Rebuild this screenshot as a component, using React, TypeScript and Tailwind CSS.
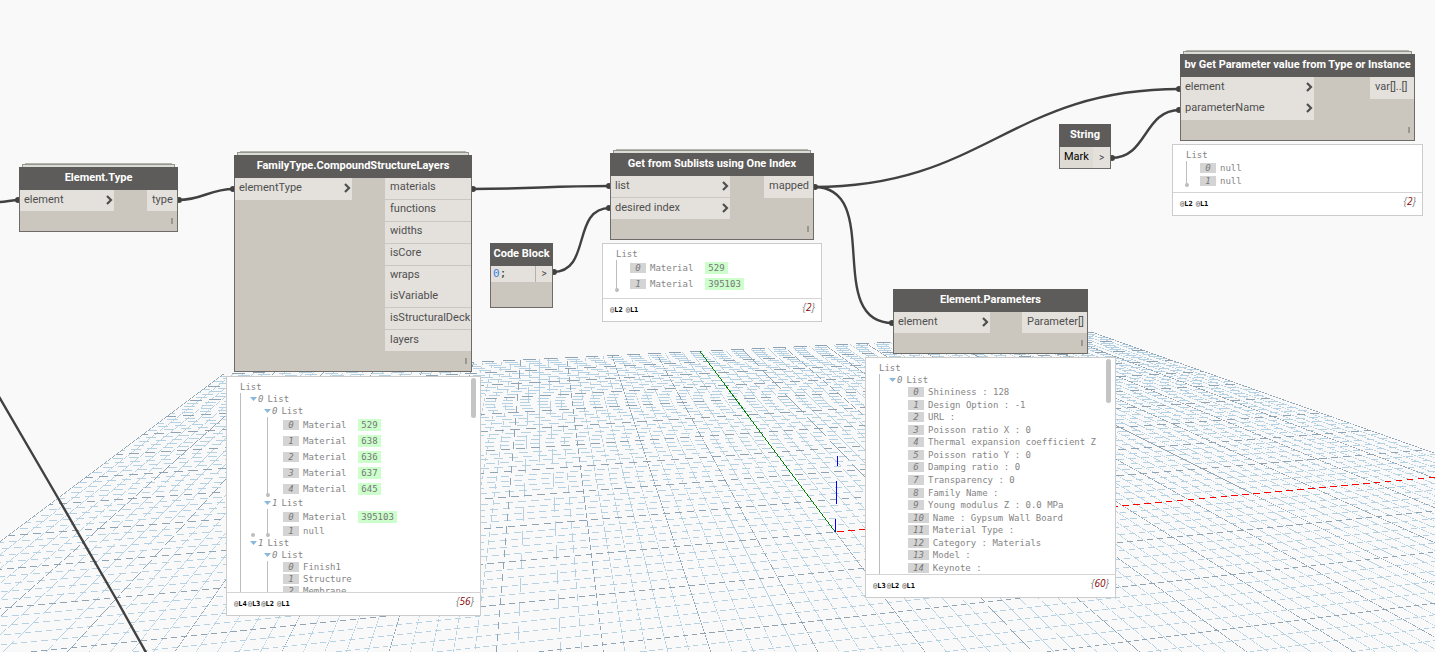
import { ReactNode } from "react"

// ---------- background grid ----------

interface Point {
  x: number
  y: number
}

const HORIZON = 137
const HALF_SIZE = 10
const MIN_DEPTH = 0.6

const project = (u: number, v: number): Point => {
  const w = 1 + 0.0178 * u + 0.0843 * v
  return {
    x: (835.3 + 0.0178 * u * 5160 + 0.0843 * v * 539.3) / w,
    y: (532 + (0.0178 * u + 0.0843 * v) * HORIZON) / w,
  }
}

// a line as a filled sliver, thinner than a pixel, so that it breaks up into dashes
const sliver = (a: Point, b: Point, thickness: number) => {
  const length = Math.hypot(b.x - a.x, b.y - a.y)
  const nx = ((a.y - b.y) / length) * (thickness / 2)
  const ny = ((b.x - a.x) / length) * (thickness / 2)
  return `M${a.x + nx} ${a.y + ny}L${b.x + nx} ${b.y + ny}L${b.x - nx} ${b.y - ny}L${a.x - nx} ${a.y - ny}Z`
}

const buildGrid = () => {
  let minor = ""
  let major = ""
  for (let i = -50; i <= 50; i++) {
    const k = i / 5

    // away from the viewer
    const nearV = Math.max(-HALF_SIZE, (MIN_DEPTH - 1 - 0.0178 * k) / 0.0843)
    let d = sliver(project(k, HALF_SIZE), project(k, nearV), 0.6)

    // across
    const nearU = Math.max(-HALF_SIZE, (MIN_DEPTH - 1 - 0.0843 * k) / 0.0178)
    if (nearU < HALF_SIZE) {
      d += sliver(project(nearU, k), project(HALF_SIZE, k), 0.6)
    }

    if (i % 5 === 0) {
      major += d
    } else {
      minor += d
    }
  }
  return { minor, major }
}

const grid = buildGrid()
const origin = project(0, 0)

const Grid = () => (
  <svg
    className="absolute inset-0 h-full w-full"
    shapeRendering="crispEdges"
    aria-hidden="true"
  >
    <path d={grid.minor} fill="#b5d1e2" />
    <path d={grid.major} fill="#8fa3b3" />
    <path d={sliver(origin, project(HALF_SIZE, 0), 0.6)} fill="#ff0000" />
    <path d={sliver(origin, project(0, HALF_SIZE), 0.8)} fill="#008000" />
    <path d="M837 456h1v10h-1zM836 481h1v23h-1zM835 519h1v13h-1z" fill="#0000ff" />
  </svg>
)

// ---------- wires ----------

const wires = [
  "M0 202C6 202 12 200 19 200",
  "M178 200C203 200 209 189 234 189",
  "M472 189C534 189 548 186 610 186",
  "M553 272C592 272 571 208 610 208",
  "M814 187C884 187 823 323 893 323",
  "M814 187C984 187 1010 89 1180 89",
  "M1111 158C1148 158 1143 110 1180 110",
  "M-2 395L58 498L115 597L148 656",
]

const joints = [
  [18, 200],
  [179, 200],
  [233, 189],
  [473, 189],
  [609, 186],
  [554, 272],
  [609, 208],
  [815, 187],
  [892, 323],
  [1179, 89],
  [1112, 158],
  [1179, 110],
]

const Wires = () => (
  <svg className="absolute inset-0 h-full w-full" aria-hidden="true">
    {wires.map((d) => (
      <path key={d} d={d} fill="none" stroke="#414141" strokeWidth="2.4" strokeLinejoin="round" />
    ))}
    {joints.map(([x, y]) => (
      <circle key={`${x}-${y}`} cx={x} cy={y} r="3" fill="#414141" />
    ))}
  </svg>
)

// ---------- nodes ----------

const IconChevron = () => (
  <svg width="7" height="10" viewBox="0 0 7 10" className="shrink-0" aria-hidden="true">
    <path d="M1 1L5 5L1 9" fill="none" stroke="#4f4f4f" strokeWidth="2.2" />
  </svg>
)

interface NodeProps {
  title: string
  place: string
  stacked?: boolean
  children: ReactNode
}

const Node = ({ title, place, stacked, children }: NodeProps) => (
  <section className={`absolute flex flex-col bg-[#cbc6be] ${place}`}>
    {stacked && (
      <>
        <div className="absolute inset-x-[6px] -top-[4px] h-[4px] border-t border-[#b5b5b0] bg-[#eeeeea]" />
        <div className="absolute inset-x-[3px] -top-[3px] h-[3px] border border-b-0 border-[#95978f] bg-[#dcdcd6]" />
      </>
    )}
    <h2 className="relative h-[23px] shrink-0 bg-[#5e5c5a] text-center text-[11px] leading-[21px] font-bold whitespace-nowrap text-white">
      {title}
    </h2>
    <div className="flex flex-1 flex-col border border-t-0 border-[#6e6c68]">
      {children}
    </div>
  </section>
)

interface PortsProps {
  inputs: string[]
  outputs: string[]
  inputWidth: string
  outputWidth: string
  divided?: boolean
}

const Ports = ({ inputs, outputs, inputWidth, outputWidth, divided }: PortsProps) => (
  <>
    <div className="flex flex-1 justify-between text-[11px] leading-[18px] text-[#4f4f4f]">
      <ul className={`flex flex-col ${inputWidth}`}>
        {inputs.map((label, i) => (
          <li
            key={label}
            className={`flex max-h-[22px] flex-1 items-center justify-between bg-[#e4e1dc] pr-px pb-0.5 pl-1 ${
              divided && i > 0 ? "border-t border-[#cbc6be]" : ""
            }`}
          >
            {label}
            <IconChevron />
          </li>
        ))}
      </ul>
      <ul className={`flex flex-col ${outputWidth}`}>
        {outputs.map((label, i) => (
          <li
            key={label}
            className={`flex max-h-[22px] flex-1 items-center bg-[#e4e1dc] pb-0.5 pl-[5px] whitespace-nowrap ${
              divided && i > 0 && label !== "isVariable" ? "border-t border-[#cbc6be]" : ""
            }`}
          >
            {label}
          </li>
        ))}
      </ul>
    </div>
    {/* lacing mark */}
    <div className="flex h-5 shrink-0 items-center justify-end pr-1">
      <span className="h-[6px] w-[2px] bg-[#9a9792]" />
    </div>
  </>
)

// ---------- watch previews ----------

const Index = ({ children }: { children: ReactNode }) => (
  <span className="min-w-4 bg-[#d4d4d4] px-[5px] text-center leading-[10px] text-[#777777] italic">
    {children}
  </span>
)

const Leaf = ({ index, text, id, row }: { index: number; text: string; id?: string; row: string }) => (
  <li className={`flex items-center whitespace-pre ${row}`}>
    <Index>{index}</Index>
    <span className="ml-1">{text}</span>
    {id && <span className="ml-3 bg-[#ccffcc] px-[3px] leading-[12px] text-[#777777]">{id}</span>}
  </li>
)

const Branch = ({ index, children }: { index: number; children: ReactNode }) => (
  <li>
    <button type="button" className="flex h-3 items-center">
      <svg width="7" height="4" viewBox="0 0 7 4" aria-hidden="true">
        <path d="M0 0h7L3.5 4z" fill="#8ab8dc" />
      </svg>
      <span className="ml-px italic">{index}</span>
      <span className="ml-1">List</span>
    </button>
    {children}
  </li>
)

const Dot = () => (
  <span className="absolute bottom-0 -left-[2px] h-1 w-1 rounded-full bg-[#bdbdbd]" />
)

interface PreviewProps {
  place: string
  levels: string[]
  count: number
  thumb?: string
  children: ReactNode
}

const Preview = ({ place, levels, count, thumb, children }: PreviewProps) => (
  <section
    className={`absolute flex flex-col border border-[#cccccc] bg-white font-['DejaVu_Sans_Mono','Liberation_Mono',monospace] text-[9px] leading-[12px] text-[#858585] ${place}`}
  >
    <div className="relative min-h-0 flex-1 overflow-hidden pt-1 pl-[13px]">
      <p>List</p>
      {children}
      {thumb && <div className={`absolute top-px right-1 w-[5px] rounded-full bg-[#c4c4c4] ${thumb}`} />}
    </div>
    <footer className="flex h-[23px] shrink-0 items-center justify-between border-t border-[#d4d4d4] pr-[6px] pl-[7px]">
      <div className="flex gap-px text-[7px] font-bold text-black">
        {levels.map((level) => (
          <span key={level} className="last:ml-0.5">
            <span className="font-normal text-[#555555]">@</span>
            {level}
          </span>
        ))}
      </div>
      <span className="pb-1.5 font-['Open_Sans',sans-serif] text-[10px] text-[#777777] italic">
        {"{"}
        <span className="text-[#8b0000]">{count}</span>
        {"}"}
      </span>
    </footer>
  </section>
)

const wallMaterials = ["529", "638", "636", "637", "645"]
const layerFunctions = ["Finish1", "Structure", "Membrane"]
const parameters = [
  "Shininess : 128",
  "Design Option : -1",
  "URL :",
  "Poisson ratio X : 0",
  "Thermal expansion coefficient Z",
  "Poisson ratio Y : 0",
  "Damping ratio : 0",
  "Transparency : 0",
  "Family Name :",
  "Young modulus Z : 0.0 MPa",
  "Name : Gypsum Wall Board",
  "Material Type :",
  "Category : Materials",
  "Model :",
  "Keynote :",
]

const App = () => {
  return (
    <main className="relative min-h-screen w-full overflow-hidden bg-[#f9f9f9] font-['Roboto','Noto_Sans',sans-serif]">
      <Grid />
      <Wires />

      <Node title="Element.Type" place="top-[167px] left-[19px] h-[65px] w-[159px]" stacked>
        <Ports inputs={["element"]} outputs={["type"]} inputWidth="w-[94px]" outputWidth="w-[30px]" />
      </Node>

      <Node
        title="FamilyType.CompoundStructureLayers"
        place="top-[155px] left-[234px] h-[217px] w-[238px]"
        stacked
      >
        <Ports
          inputs={["elementType"]}
          outputs={[
            "materials",
            "functions",
            "widths",
            "isCore",
            "wraps",
            "isVariable",
            "isStructuralDeck",
            "layers",
          ]}
          inputWidth="w-[117px]"
          outputWidth="w-[86px]"
          divided
        />
      </Node>

      <Node title="Code Block" place="top-[243px] left-[490px] h-[65px] w-[63px]">
        <div className="flex h-4 items-stretch bg-[#e4e1dc]">
          <code className="flex-1 pl-[2px] font-['DejaVu_Sans_Mono',monospace] text-[11px] leading-[16px] text-[#333333]">
            <span className="text-[#3b82e0]">0</span>;
          </code>
          <button
            type="button"
            className="w-[17px] border-l border-[#b5b0a8] text-[10px] leading-[14px] text-[#444444]"
          >
            &gt;
          </button>
        </div>
      </Node>

      <Node
        title="Get from Sublists using One Index"
        place="top-[153px] left-[610px] h-[87px] w-[204px]"
        stacked
      >
        <Ports
          inputs={["list", "desired index"]}
          outputs={["mapped"]}
          inputWidth="w-[119px]"
          outputWidth="w-[49px]"
          divided
        />
      </Node>

      <Node title="Element.Parameters" place="top-[289px] left-[893px] h-[65px] w-[195px]">
        <Ports inputs={["element"]} outputs={["Parameter[]"]} inputWidth="w-[96px]" outputWidth="w-[65px]" />
      </Node>

      <Node title="String" place="top-[124px] left-[1059px] h-[45px] w-[52px]">
        <div className="flex flex-1 bg-[#e4e1dc] text-[11px] text-black">
          <input
            aria-label="String value"
            defaultValue="Mark"
            className="w-[33px] bg-[#dedbd5] pl-1 outline-none"
          />
          <button type="button" className="flex-1 text-[10px] text-[#444444]">
            &gt;
          </button>
        </div>
      </Node>

      <Node
        title="bv Get Parameter value from Type or Instance"
        place="top-[54px] left-[1180px] h-[87px] w-[235px]"
        stacked
      >
        <Ports
          inputs={["element", "parameterName"]}
          outputs={["var[]..[]"]}
          inputWidth="w-[133px]"
          outputWidth="w-[44px]"
        />
      </Node>

      <Preview
        place="top-[376px] left-[226px] h-[240px] w-[255px]"
        levels={["L4", "L3", "L2", "L1"]}
        count={56}
        thumb="h-10"
      >
        <ul className="border-l border-[#bdbdbd] pl-[9px]">
          <Branch index={0}>
            <ul className="relative ml-[3px] pl-[11px]">
              <Branch index={0}>
                <ul className="relative ml-[3px] border-l border-[#bdbdbd] pl-[15px]">
                  {wallMaterials.map((id, i) => (
                    <Leaf key={id} index={i} text="Material" id={id} row="h-4" />
                  ))}
                  <Dot />
                </ul>
              </Branch>
              <Branch index={1}>
                <ul className="relative ml-[3px] border-l border-[#bdbdbd] pl-[15px]">
                  <Leaf index={0} text="Material" id="395103" row="h-4" />
                  <Leaf index={1} text="null" row="h-3" />
                  <Dot />
                </ul>
              </Branch>
              <Dot />
            </ul>
          </Branch>
          <Branch index={1}>
            <ul className="ml-[3px] pl-[11px]">
              <Branch index={0}>
                <ul className="ml-[3px] border-l border-[#bdbdbd] pl-[15px]">
                  {layerFunctions.map((name, i) => (
                    <Leaf key={name} index={i} text={name} row="h-3" />
                  ))}
                </ul>
              </Branch>
            </ul>
          </Branch>
        </ul>
      </Preview>

      <Preview place="top-[243px] left-[602px] h-[79px] w-[220px]" levels={["L2", "L1"]} count={2}>
        <ul className="relative border-l border-[#bdbdbd] pl-[13px]">
          <Leaf index={0} text="Material" id="529" row="h-4" />
          <Leaf index={1} text="Material" id="395103" row="h-4" />
          <Dot />
        </ul>
      </Preview>

      <Preview
        place="top-[357px] left-[865px] h-[241px] w-[251px]"
        levels={["L3", "L2", "L1"]}
        count={60}
        thumb="h-11"
      >
        <ul className="border-l border-[#bdbdbd] pl-[9px]">
          <Branch index={0}>
            <ul className="ml-[3px] flex h-[188px] flex-col pl-[16px]">
              {parameters.map((text, i) => (
                <Leaf key={text} index={i} text={text} row="flex-1" />
              ))}
            </ul>
          </Branch>
        </ul>
      </Preview>

      <Preview place="top-[144px] left-[1172px] h-[72px] w-[251px]" levels={["L2", "L1"]} count={2}>
        <ul className="relative border-l border-[#bdbdbd] pl-[13px]">
          <Leaf index={0} text="null" row="h-[13px]" />
          <Leaf index={1} text="null" row="h-[13px]" />
          <Dot />
        </ul>
      </Preview>
    </main>
  )
}

export default App
